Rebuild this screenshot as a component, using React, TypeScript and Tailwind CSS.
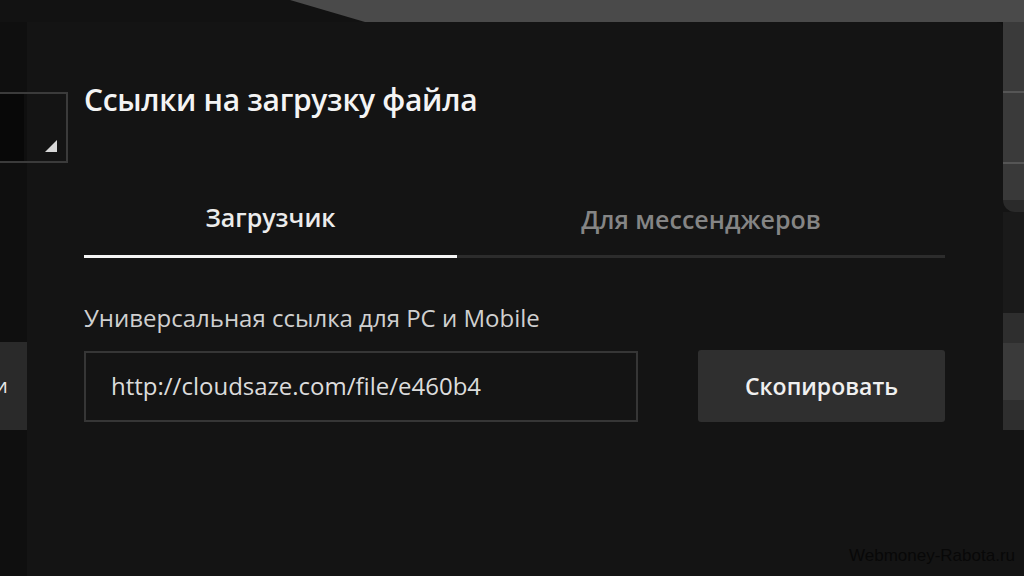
import React from "react";

// Модальное окно "Ссылки на загрузку файла" поверх затемнённой страницы
export default function App() {
  return (
    <div className="relative w-[1024px] h-[576px] overflow-hidden bg-[#101010] flex flex-col font-['Open_Sans','Noto_Sans',sans-serif]">
      {/* верхняя полоса фона с диагональю */}
      <div className="h-[22px] shrink-0 bg-[#4a4a4a] relative">
        <div className="absolute inset-0 bg-[#121212] [clip-path:polygon(0_0,290px_0,365px_100%,0_100%)]" />
      </div>

      <div className="flex flex-1 min-h-0">
        {/* левая полоса страницы */}
        <div className="w-[27px] shrink-0 bg-[#0f0f0f] flex flex-col">
          <div className="h-[320px]" />
          <div className="h-[88px] bg-[#2a2a2a] flex items-center justify-start overflow-hidden">
            <span className="text-[20px] text-[#e8e8e8] -ml-[5px] leading-none">и</span>
          </div>
        </div>

        {/* само окно */}
        <div className="flex-1 bg-[#141414] rounded-tr-[6px] flex flex-col pl-[57px] pr-[58px] pt-[60px]">
          <h2 className="text-[30px] font-semibold text-[#f4f4f4] leading-[36px] tracking-[-0.3px] whitespace-nowrap">
            Ссылки на загрузку файла
          </h2>

          {/* вкладки */}
          <div className="mt-[82px] flex">
            <button className="w-[373px] pb-[21px] border-b-[3px] border-[#f5f5f5] text-[25px] font-semibold text-[#ececec] leading-[34px]">
              Загрузчик
            </button>
            <button className="flex-1 pb-[21px] text-[25px] font-semibold text-[#858585] leading-[34px] relative">
              Для мессенджеров
              <span className="absolute left-0 right-0 bottom-0 h-[3px] bg-[#2c2c2c]" />
            </button>
          </div>

          <div className="mt-[44px] text-[24px] text-[#d0d0d0] leading-[32px] whitespace-nowrap">
            Универсальная ссылка для PC и Mobile
          </div>

          <div className="mt-[16px] flex items-center justify-between">
            <div className="w-[554px] h-[71px] border-2 border-[#363636] flex items-center pl-[25px] text-[24px] text-[#dcdcdc]">
              http://cloudsaze.com/file/e460b4
            </div>
            <button className="w-[247px] h-[72px] bg-[#2f2f2f] rounded-[3px] text-[23px] font-semibold text-[#f0f0f0]">
              Скопировать
            </button>
          </div>
        </div>

        {/* правая полоса страницы */}
        <div className="w-[21px] shrink-0 flex flex-col bg-[#141414]">
          <div className="h-[69px] bg-[#3a3a3a]" />
          <div className="h-[2px] bg-[#555]" />
          <div className="h-[69px] bg-[#3a3a3a]" />
          <div className="h-[2px] bg-[#555]" />
          <div className="h-[36px] bg-[#393939]" />
          <div className="h-[12px] bg-[#2a2a2a] rounded-bl-[14px]" />
          <div className="h-[101px] bg-[#1a1a1a]" />
          <div className="h-[30px] bg-[#2e2e2e]" />
          <div className="h-[57px] bg-[#3a3a3a]" />
          <div className="h-[30px] bg-[#2e2e2e]" />
        </div>
      </div>

      {/* выпадающий список страницы, виден слева */}
      <div className="absolute left-0 top-[92px] w-[68px] h-[71px] border-2 border-l-0 border-[#3b3b3b] flex">
        <div className="w-[24px] bg-[#080808]" />
        <div className="flex-1 relative">
          <span className="absolute right-[9px] bottom-[9px] w-0 h-0 border-l-[12px] border-l-transparent border-b-[12px] border-b-[#d8d8d8]" />
        </div>
      </div>

      {/* водяной знак */}
      <div className="absolute right-[9px] bottom-[8px] text-[17px] text-[#080808] font-['Liberation_Sans',Arial,sans-serif]">
        Webmoney-Rabota.ru
      </div>
    </div>
  );
}
